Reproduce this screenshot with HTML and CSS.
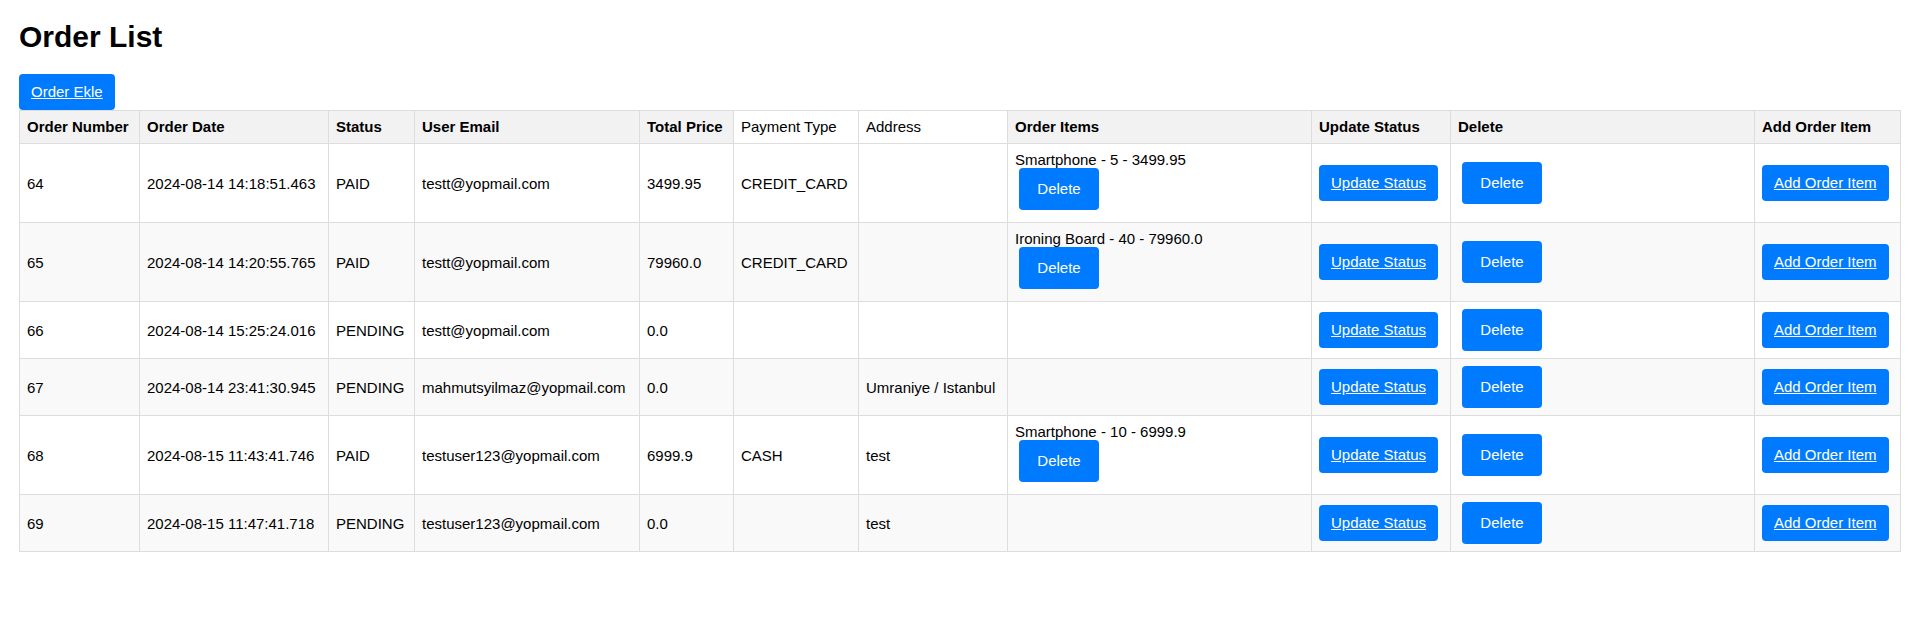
FILE: index.html
```html
<!DOCTYPE html>
<html lang="en">
<head>
<meta charset="utf-8">
<title>Order List</title>
<link rel="stylesheet" href="styles.css">
</head>
<body class="page">
  <h1 class="title">Order List</h1>
  <div class="toolbar">
    <a class="link-btn" href="#">Order Ekle</a>
  </div>
  <table class="orders">
    <colgroup>
      <col class="c-num">
      <col class="c-date">
      <col class="c-status">
      <col class="c-email">
      <col class="c-price">
      <col class="c-pay">
      <col class="c-addr">
      <col class="c-items">
      <col class="c-update">
      <col class="c-delete">
      <col class="c-add">
    </colgroup>
    <thead>
      <tr>
        <th>Order Number</th>
        <th>Order Date</th>
        <th>Status</th>
        <th>User Email</th>
        <th>Total Price</th>
        <td class="plain-head">Payment Type</td>
        <td class="plain-head">Address</td>
        <th>Order Items</th>
        <th>Update Status</th>
        <th>Delete</th>
        <th>Add Order Item</th>
      </tr>
    </thead>
    <tbody>
      <tr>
        <td>64</td>
        <td>2024-08-14 14:18:51.463</td>
        <td>PAID</td>
        <td>testt@yopmail.com</td>
        <td>3499.95</td>
        <td>CREDIT_CARD</td>
        <td></td>
        <td class="items"><div class="item"><span class="item-text">Smartphone - 5 - 3499.95</span><button class="del-btn item-del" type="button">Delete</button></div></td>
        <td><a class="link-btn" href="#">Update Status</a></td>
        <td><button class="del-btn row-del" type="button">Delete</button></td>
        <td><a class="link-btn" href="#">Add Order Item</a></td>
      </tr>
      <tr>
        <td>65</td>
        <td>2024-08-14 14:20:55.765</td>
        <td>PAID</td>
        <td>testt@yopmail.com</td>
        <td>79960.0</td>
        <td>CREDIT_CARD</td>
        <td></td>
        <td class="items"><div class="item"><span class="item-text">Ironing Board - 40 - 79960.0</span><button class="del-btn item-del" type="button">Delete</button></div></td>
        <td><a class="link-btn" href="#">Update Status</a></td>
        <td><button class="del-btn row-del" type="button">Delete</button></td>
        <td><a class="link-btn" href="#">Add Order Item</a></td>
      </tr>
      <tr>
        <td>66</td>
        <td>2024-08-14 15:25:24.016</td>
        <td>PENDING</td>
        <td>testt@yopmail.com</td>
        <td>0.0</td>
        <td></td>
        <td></td>
        <td></td>
        <td><a class="link-btn" href="#">Update Status</a></td>
        <td><button class="del-btn row-del" type="button">Delete</button></td>
        <td><a class="link-btn" href="#">Add Order Item</a></td>
      </tr>
      <tr>
        <td>67</td>
        <td>2024-08-14 23:41:30.945</td>
        <td>PENDING</td>
        <td>mahmutsyilmaz@yopmail.com</td>
        <td>0.0</td>
        <td></td>
        <td>Umraniye / Istanbul</td>
        <td></td>
        <td><a class="link-btn" href="#">Update Status</a></td>
        <td><button class="del-btn row-del" type="button">Delete</button></td>
        <td><a class="link-btn" href="#">Add Order Item</a></td>
      </tr>
      <tr>
        <td>68</td>
        <td>2024-08-15 11:43:41.746</td>
        <td>PAID</td>
        <td>testuser123@yopmail.com</td>
        <td>6999.9</td>
        <td>CASH</td>
        <td>test</td>
        <td class="items"><div class="item"><span class="item-text">Smartphone - 10 - 6999.9</span><button class="del-btn item-del" type="button">Delete</button></div></td>
        <td><a class="link-btn" href="#">Update Status</a></td>
        <td><button class="del-btn row-del" type="button">Delete</button></td>
        <td><a class="link-btn" href="#">Add Order Item</a></td>
      </tr>
      <tr>
        <td>69</td>
        <td>2024-08-15 11:47:41.718</td>
        <td>PENDING</td>
        <td>testuser123@yopmail.com</td>
        <td>0.0</td>
        <td></td>
        <td>test</td>
        <td></td>
        <td><a class="link-btn" href="#">Update Status</a></td>
        <td><button class="del-btn row-del" type="button">Delete</button></td>
        <td><a class="link-btn" href="#">Add Order Item</a></td>
      </tr>
    </tbody>
  </table>
</body>
</html>
```
FILE: styles.css
```css
.page {
  margin: 0;
  padding: 20px 20px 20px 19px;
  background: #fff;
  color: #000;
  font-family: "Liberation Sans", Arial, sans-serif;
  font-size: 15px;
}

.title {
  margin: 0 0 20px;
  font-size: 30px;
  line-height: 34px;
  font-weight: bold;
}

.toolbar {
  display: flex;
}

.link-btn {
  display: inline-block;
  padding: 10px 12px;
  line-height: 16px;
  font-size: 15px;
  color: #fff;
  background: #007bff;
  border-radius: 4px;
  text-decoration: underline;
  white-space: nowrap;
}

.del-btn {
  display: inline-block;
  width: 80px;
  height: 42px;
  padding: 0;
  border: none;
  border-radius: 4px;
  background: #007bff;
  color: #fff;
  font-family: "Liberation Sans", Arial, sans-serif;
  font-size: 15px;
  line-height: 42px;
  cursor: pointer;
}

.row-del {
  margin-left: 4px;
}

.orders {
  width: calc(100% + 1px);
  table-layout: fixed;
  border-collapse: collapse;
}

.c-num { width: 120px; }
.c-date { width: 189px; }
.c-status { width: 86px; }
.c-email { width: 225px; }
.c-price { width: 94px; }
.c-pay { width: 125px; }
.c-addr { width: 149px; }
.c-items { width: 304px; }
.c-update { width: 139px; }
.c-delete { width: 304px; }
.c-add { width: 146px; }

.orders th,
.orders td {
  border: 1px solid #ddd;
  padding: 7px;
  text-align: left;
  vertical-align: middle;
  line-height: 17px;
  white-space: nowrap;
}

.orders thead th,
.orders thead td {
  padding: 8px 7px;
  line-height: 16px;
}

.orders thead th {
  background: #f2f2f2;
  font-weight: bold;
}

.orders thead .plain-head {
  background: #fff;
  font-weight: normal;
}

.orders tbody tr:nth-child(even) {
  background: #f9f9f9;
}

.item {
  display: flex;
  flex-direction: column;
  align-items: flex-start;
}

.item-text {
  display: block;
  line-height: 17px;
}

.item-del {
  margin: 0 0 5px 4px;
}
```
